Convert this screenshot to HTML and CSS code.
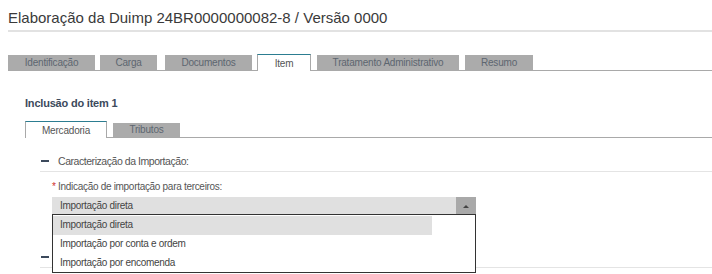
FILE: index.html
```html
<!DOCTYPE html>
<html lang="pt-BR">
<head>
  <meta charset="UTF-8">
  <title>Elaboração da Duimp</title>
  <link rel="stylesheet" href="styles.css">
</head>
<body>
  <h1 class="page-title">Elaboração da Duimp 24BR0000000082-8 / Versão 0000</h1>

  <ul class="tabs">
    <li class="tab tab-ident">Identificação</li>
    <li class="tab tab-carga">Carga</li>
    <li class="tab tab-docs">Documentos</li>
    <li class="tab tab-item active">Item</li>
    <li class="tab tab-trat">Tratamento Administrativo</li>
    <li class="tab tab-resumo">Resumo</li>
  </ul>

  <div class="content">
    <h2 class="sub-title">Inclusão do item 1</h2>

    <ul class="tabs subtabs">
      <li class="tab tab-merc active">Mercadoria</li>
      <li class="tab tab-trib">Tributos</li>
    </ul>

    <div class="section">
      <div class="section-head">
        <span class="toggle"></span>
        <span>Caracterização da Importação:</span>
      </div>

      <div class="field">
        <label class="field-label"><span class="req">*</span> Indicação de importação para terceiros:</label>
        <div class="select">
          <div class="select-value">Importação direta</div>
          <div class="select-btn"><span class="caret"></span></div>
          <ul class="options">
            <li class="option hover">Importação direta</li>
            <li class="option">Importação por conta e ordem</li>
            <li class="option">Importação por encomenda</li>
          </ul>
        </div>
      </div>
    </div>

    <div class="section section-next">
      <div class="section-head">
        <span class="toggle"></span>
      </div>
    </div>
  </div>
</body>
</html>
```

FILE: styles.css
```css
html, body {
  height: 100%;
}

body {
  font-family: "Liberation Sans", Arial, sans-serif;
  color: #444;
  margin: 0;
  padding: 0 0 0 8px;
  background: #fff;
  box-sizing: border-box;
  min-height: 274px;
}

.page-title {
  font-size: 15px;
  font-weight: normal;
  line-height: 20px;
  margin: 0;
  padding: 8px 0 2px;
  border-bottom: 2px solid #e2e2e2;
  color: #3a3a3a;
}

.tabs {
  list-style: none;
  margin: 23px 0 0;
  padding: 0;
  display: flex;
  gap: 6px;
  height: 15px;
  border-bottom: 1px solid #a9a9a9;
}

.tab {
  background: #ababab;
  color: #5d6670;
  font-size: 10px;
  letter-spacing: -0.2px;
  line-height: 15px;
  text-align: center;
  height: 15px;
}

.tab.active {
  background: #fff;
  color: #555;
  border: 1px solid #a9a9a9;
  border-top: 1px solid #2c7d91;
  border-bottom: none;
  height: 16px;
  line-height: 17px;
  margin-top: -1px;
}

.tab-ident { width: 87px; }
.tab-carga { width: 57px; margin-left: -1px; }
.tab-docs { width: 87px; margin-left: 2px; }
.tab-item { width: 52px; margin-left: -1px; }
.tab-trat { width: 142px; }
.tab-resumo { width: 68px; }

.content {
  padding-left: 17px;
}

.sub-title {
  font-size: 11px;
  font-weight: bold;
  letter-spacing: -0.2px;
  color: #3c4a5c;
  margin: 25px 0 0;
  line-height: 14px;
}

.subtabs {
  margin-top: 12px;
  gap: 6px;
}

.tab-merc { width: 80px; }
.tab-trib { width: 67px; margin-top: 1px; height: 14px; line-height: 14px; }

.section {
  margin-left: 15px;
}

.section-head {
  display: flex;
  align-items: center;
  font-size: 10.5px;
  letter-spacing: -0.45px;
  color: #555;
  height: 16px;
  margin-top: 15px;
  padding-bottom: 2px;
  border-bottom: 1px solid #e4e4e4;
}

.section-next .section-head {
  margin-top: 34px;
}

.toggle {
  width: 8px;
  height: 2px;
  background: #3c4a5c;
  margin: 0 9px 0 1px;
}

.field {
  padding: 9px 0 0 12px;
  font-size: 10px;
  letter-spacing: -0.3px;
}

.field-label {
  display: block;
  color: #555;
  line-height: 12px;
}

.req {
  color: #d0312d;
}

.select {
  position: relative;
  display: flex;
  width: 424px;
  height: 18px;
  margin-top: 4px;
  background: #e0e0e0;
}

.select-value {
  flex: 1;
  padding-left: 8px;
  line-height: 18px;
  color: #444;
}

.select-btn {
  width: 20px;
  background: #a9a9a9;
  display: flex;
  align-items: center;
  justify-content: center;
}

.caret {
  width: 0;
  height: 0;
  border-left: 3px solid transparent;
  border-right: 3px solid transparent;
  border-bottom: 3px solid #444;
}

.options {
  position: absolute;
  top: 17px;
  left: 0;
  width: 422px;
  list-style: none;
  margin: 0;
  padding: 1px 0 0;
  background: #fff;
  border: 1px solid #333;
  height: 56px;
  z-index: 2;
}

.option {
  height: 19px;
  line-height: 18px;
  padding-left: 7px;
  color: #444;
}

.option.hover {
  background: #e0e0e0;
  width: 372px;
}
```
